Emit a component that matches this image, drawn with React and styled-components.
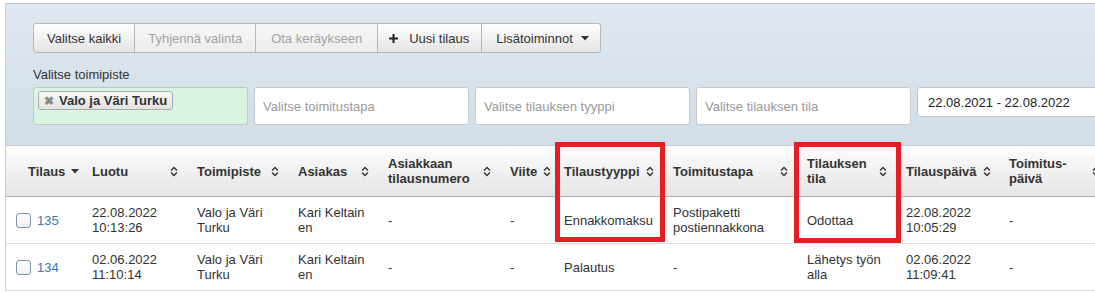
import React from 'react';
import styled, { createGlobalStyle } from 'styled-components';

const Global = createGlobalStyle`
  html, body { margin: 0; padding: 0; background: #fff; overflow: hidden; }
  body { font-family: "Liberation Sans", Arial, sans-serif; font-size: 13px; color: #333; }
  * { box-sizing: border-box; }
`;

const Page = styled.div`
  position: relative;
  margin: 3px 0 0 5px;
  width: 1110px;
  border-left: 1px solid #c8d0d7;
`;

const Panel = styled.div`
  border-top: 1px solid #b9c5cf;
  border-bottom: 1px solid #c5ced6;
  background: linear-gradient(#dfe8f0, #d2dde7);
  padding: 19px 0 20px 27px;
`;

const Toolbar = styled.div`
  display: flex;
  height: 30px;
`;

const Button = styled.button`
  flex: none;
  display: flex;
  align-items: center;
  height: 30px;
  padding: 0 ${p => p.$pr ?? 13}px 0 ${p => p.$pl ?? 13}px;
  margin: 0 0 0 -1px;
  font-family: inherit;
  font-size: 13px;
  color: ${p => (p.disabled ? '#a3a3a3' : '#333')};
  background: ${p => (p.disabled ? 'linear-gradient(#f7f7f7, #ececec)' : 'linear-gradient(#ffffff, #e4e4e4)')};
  border: 1px solid #b3b9bf;
  border-radius: 0;
  cursor: default;
  &:first-child { margin-left: 0; border-radius: 3px 0 0 3px; }
  &:last-child { border-radius: 0 3px 3px 0; }
`;

const Label = styled.div`
  margin: 14px 0 5px;
  line-height: 15px;
  color: #333;
`;

const Filters = styled.div`
  display: flex;
  align-items: flex-start;
  gap: 6px;
`;

const Field = styled.div`
  flex: none;
  width: 215px;
  height: 38px;
  display: flex;
  align-items: ${p => (p.$filled ? 'flex-start' : 'center')};
  padding: ${p => (p.$filled ? '3px 4px' : '0 8px')};
  border: 1px solid ${p => (p.$filled ? '#b7cdbf' : '#c4cacf')};
  border-radius: 3px;
  background: ${p => (p.$filled ? '#d8f5e2' : '#fff')};
  color: #999;
`;

const Tag = styled.span`
  display: inline-flex;
  align-items: center;
  height: 19px;
  padding: 0 5px;
  border: 1px solid #aaa;
  border-radius: 3px;
  background: linear-gradient(#f8f8f8, #e2e2e2);
  font-weight: bold;
  color: #333;
`;

const TagX = styled.span`
  color: #888;
  font-size: 12px;
  margin-right: 5px;
`;

const DateField = styled.div`
  flex: none;
  width: 200px;
  height: 30px;
  display: flex;
  align-items: center;
  padding: 0 10px;
  border: 1px solid #c0c6cb;
  border-radius: 3px;
  background: #fff;
  color: #222;
`;

const Table = styled.table`
  border-collapse: separate;
  border-spacing: 0;
  table-layout: fixed;
  width: 1103px;
`;

const Th = styled.th`
  padding: 0 9px 0 ${p => p.$pl ?? 10}px;
  background: linear-gradient(#fdfdfd, #e5e5e5);
  border-bottom: 1px solid #b0b0b0;
  text-align: left;
  font-weight: bold;
  line-height: 15px;
  color: #333;
`;

const HeadInner = styled.div`
  height: 50px;
  display: flex;
  align-items: center;
  justify-content: ${p => (p.$start ? 'flex-start' : 'space-between')};
  gap: 6px;
`;

const Td = styled.td`
  padding: 0 10px;
  border-bottom: 1px solid #dde2e7;
  line-height: 15px;
  color: #333;
  word-break: ${p => (p.$breakAll ? 'break-all' : 'normal')};
`;

const CellInner = styled.div`
  height: 46px;
  display: flex;
  align-items: center;
  gap: 6px;
`;

const Check = styled.span`
  flex: none;
  width: 15px;
  height: 15px;
  border: 1px solid #8193a7;
  border-radius: 3px;
  background: linear-gradient(#fff, #eef1f4);
`;

const OrderLink = styled.a`
  color: #3a78b5;
  text-decoration: none;
`;

const Highlight = styled.div`
  position: absolute;
  left: ${p => p.$left}px;
  top: ${p => p.$top}px;
  width: ${p => p.$w}px;
  height: ${p => p.$h}px;
  border: 5px solid #e31e24;
  pointer-events: none;
`;

const SortIcon = () => (
  <svg width="8" height="11" viewBox="0 0 8 11" style={{ flex: 'none' }}>
    <path d="M1 4.5 L4 1.5 L7 4.5 M1 6.5 L4 9.5 L7 6.5" fill="none" stroke="#333" strokeWidth="1.4" />
  </svg>
);

const Caret = ({ color = '#333' }) => (
  <svg width="8" height="5" viewBox="0 0 8 5" style={{ flex: 'none' }}>
    <path d="M0 0 H8 L4 4.5 Z" fill={color} />
  </svg>
);

const PlusIcon = () => (
  <svg width="9" height="9" viewBox="0 0 9 9" style={{ marginRight: 11 }}>
    <path d="M4.5 0 V9 M0 4.5 H9" stroke="#222" strokeWidth="2" />
  </svg>
);

const cols = [76, 105, 101, 90, 122, 54, 109, 134, 99, 103, 110];

const headers = [
  'Luotu',
  'Toimipiste',
  'Asiakas',
  'Asiakkaan tilausnumero',
  'Viite',
  'Tilaustyyppi',
  'Toimitustapa',
  'Tilauksen tila',
  'Tilauspäivä',
  'Toimitus-päivä',
];

const rows = [
  {
    id: '135',
    created: ['22.08.2022', '10:13:26'],
    office: 'Valo ja Väri Turku',
    customer: 'Kari Keltainen',
    custNo: '-',
    ref: '-',
    type: 'Ennakkomaksu',
    delivery: 'Postipaketti postiennakkona',
    status: 'Odottaa',
    ordered: ['22.08.2022', '10:05:29'],
    deliveryDate: '-',
  },
  {
    id: '134',
    created: ['02.06.2022', '11:10:14'],
    office: 'Valo ja Väri Turku',
    customer: 'Kari Keltainen',
    custNo: '-',
    ref: '-',
    type: 'Palautus',
    delivery: '-',
    status: 'Lähetys työn alla',
    ordered: ['02.06.2022', '11:09:41'],
    deliveryDate: '-',
  },
];

const Lines = ({ lines }) => (
  <div>
    {lines[0]}
    <br />
    {lines[1]}
  </div>
);

export default function App() {
  return (
    <>
      <Global />
      <Page>
        <Panel>
          <Toolbar>
            <Button>Valitse kaikki</Button>
            <Button disabled>Tyhjennä valinta</Button>
            <Button disabled $pl={15} $pr={15}>Ota keräykseen</Button>
            <Button $pl={11} $pr={12}>
              <PlusIcon />
              Uusi tilaus
            </Button>
            <Button $pl={14} $pr={11}>
              Lisätoiminnot
              <span style={{ width: 8 }} />
              <Caret />
            </Button>
          </Toolbar>
          <Label>Valitse toimipiste</Label>
          <Filters>
            <Field $filled>
              <Tag>
                <TagX>✖</TagX>
                Valo ja Väri Turku
              </Tag>
            </Field>
            <Field>Valitse toimitustapa</Field>
            <Field>Valitse tilauksen tyyppi</Field>
            <Field>Valitse tilauksen tila</Field>
            <DateField>22.08.2021 - 22.08.2022</DateField>
          </Filters>
        </Panel>
        <Table>
          <colgroup>
            {cols.map((w, i) => (
              <col key={i} style={{ width: w }} />
            ))}
          </colgroup>
          <thead>
            <tr>
              <Th $pl={22}>
                <HeadInner $start>
                  Tilaus
                  <Caret />
                </HeadInner>
              </Th>
              {headers.map(h => (
                <Th key={h}>
                  <HeadInner>
                    <span>{h}</span>
                    <SortIcon />
                  </HeadInner>
                </Th>
              ))}
            </tr>
          </thead>
          <tbody>
            {rows.map(r => (
              <tr key={r.id}>
                <Td>
                  <CellInner>
                    <Check />
                    <OrderLink href="#">{r.id}</OrderLink>
                  </CellInner>
                </Td>
                <Td><CellInner><Lines lines={r.created} /></CellInner></Td>
                <Td><CellInner>{r.office}</CellInner></Td>
                <Td $breakAll><CellInner>{r.customer}</CellInner></Td>
                <Td><CellInner>{r.custNo}</CellInner></Td>
                <Td><CellInner>{r.ref}</CellInner></Td>
                <Td><CellInner>{r.type}</CellInner></Td>
                <Td><CellInner>{r.delivery}</CellInner></Td>
                <Td><CellInner>{r.status}</CellInner></Td>
                <Td><CellInner><Lines lines={r.ordered} /></CellInner></Td>
                <Td><CellInner>{r.deliveryDate}</CellInner></Td>
              </tr>
            ))}
          </tbody>
        </Table>
        <Highlight $left={549} $top={139} $w={110} $h={100} />
        <Highlight $left={788} $top={139} $w={107} $h={101} />
      </Page>
    </>
  );
}
